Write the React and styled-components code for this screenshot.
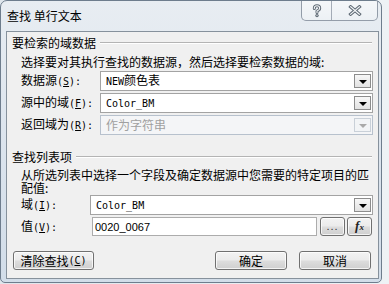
import React from 'react';
import styled, { createGlobalStyle } from 'styled-components';

const Global = createGlobalStyle`
  html, body { margin: 0; padding: 0; }
  body {
    width: 389px; height: 284px; overflow: hidden;
    background: #e6ebf0;
    font-family: "Noto Sans CJK SC", "Noto Sans", sans-serif;
    color: #000;
  }
`;

const Screen = styled.div`
  width: 389px;
  height: 284px;
  background: linear-gradient(90deg, #dfe6ec, #eef2f5);
  display: flex;
  align-items: flex-start;
`;

const Window = styled.div`
  box-sizing: border-box;
  width: 382px;
  height: 283px;
  border: 1px solid #6e7d8d;
  border-radius: 7px 7px 5px 5px;
  background: linear-gradient(180deg, #e8edf2 0%, #dde5ee 45%, #d2dde9 100%);
  display: flex;
  flex-direction: column;
  padding: 0 2px 3px 5px;
`;

const TitleBar = styled.div`
  height: 30px;
  display: flex;
  justify-content: space-between;
  align-items: flex-start;
  flex-shrink: 0;
`;

const Title = styled.div`
  margin: 9px 0 0 1px;
  font-size: 12px;
  line-height: 12px;
  white-space: pre;
`;

const Caption = styled.div`
  display: flex;
  height: 19px;
  margin-right: 1px;
  border: 1px solid rgba(70, 85, 105, 0.55);
  border-top: none;
  border-radius: 0 0 5px 5px;
  background: linear-gradient(180deg, rgba(255,255,255,0.55), rgba(255,255,255,0.25));
  overflow: hidden;
`;

const CapBtn = styled.div`
  width: ${p => p.$w}px;
  height: 19px;
  display: flex;
  align-items: center;
  justify-content: center;
  & + & { border-left: 1px solid rgba(70, 85, 105, 0.45); }
`;

const Client = styled.div`
  box-sizing: border-box;
  height: 248px;
  border: 1px solid #86919c;
  background: #f0f0f0;
  padding: 5px 5px 0 5px;
  display: flex;
  flex-direction: column;
`;

const GroupHeader = styled.div`
  display: flex;
  align-items: center;
  gap: 4px;
  height: 12px;
  margin-top: ${p => p.$mt}px;
  font-size: 12px;
  line-height: 12px;
`;

const Rule = styled.div`
  flex: 1;
  margin-right: 1px;
  border-top: 1px solid #b4b4b4;
  border-bottom: 1px solid #ffffff;
`;

const Desc = styled.div`
  padding-left: 9px;
  margin-top: ${p => p.$mt}px;
  font-size: 12px;
  line-height: ${p => p.$lh}px;
`;

const Rows = styled.div`
  display: flex;
  flex-direction: column;
  gap: 2px;
  margin-top: ${p => p.$mt}px;
`;

const Row = styled.div`
  display: flex;
  align-items: center;
  height: 20px;
  padding-left: 9px;
`;

const Label = styled.div`
  width: ${p => p.$w}px;
  flex-shrink: 0;
  font-size: 12px;
  line-height: 12px;
  white-space: nowrap;
`;

const Mono = styled.span`
  font-family: "DejaVu Sans Mono", "Liberation Mono", monospace;
  font-size: 10px;
`;

const Combo = styled.div`
  box-sizing: border-box;
  flex: 1;
  height: 20px;
  border: 1px solid ${p => (p.$disabled ? '#b7c1cd' : '#a3a3a3')};
  background: ${p => (p.$disabled ? '#f4f5f7' : '#ffffff')};
  display: flex;
  align-items: center;
  padding-left: 5px;
  font-size: 12px;
  line-height: 12px;
  color: ${p => (p.$disabled ? '#a0a0a0' : '#000')};
`;

const ComboText = styled.div`
  flex: 1;
  white-space: nowrap;
`;

const DropBtn = styled.div`
  box-sizing: border-box;
  width: 17px;
  height: 14px;
  margin-right: 1px;
  border: 1px solid ${p => (p.$disabled ? '#c9d0d8' : '#8c8c8c')};
  background: ${p => (p.$disabled ? '#f2f4f6' : 'linear-gradient(180deg, #f7f7f7, #e2e2e2)')};
  display: flex;
  align-items: center;
  justify-content: center;
`;

const Arrow = styled.div`
  width: 0;
  height: 0;
  border-left: 4px solid transparent;
  border-right: 4px solid transparent;
  border-top: 4px solid ${p => (p.$disabled ? '#a9a9a9' : '#000')};
  margin-top: 1px;
`;

const ValueRow = styled.div`
  display: flex;
  align-items: center;
  height: 19px;
  margin-top: 2px;
  padding-left: 9px;
  padding-right: 1px;
  gap: 2px;
`;

const Input = styled.div`
  box-sizing: border-box;
  flex: 1;
  height: 19px;
  border: 1px solid #acacac;
  background: #fff;
  display: flex;
  align-items: center;
  padding-left: 2px;
  font-family: "Liberation Sans", Arial, sans-serif;
  font-size: 11px;
  margin-right: 1px;
`;

const Button = styled.div`
  box-sizing: border-box;
  width: ${p => p.$w}px;
  height: 19px;
  border: 1px solid #707070;
  border-radius: 3px;
  background: linear-gradient(180deg, #f3f3f3 0%, #ebebeb 48%, #dddddd 52%, #cfcfcf 100%);
  box-shadow: inset 0 0 0 1px rgba(255,255,255,0.75);
  display: flex;
  align-items: center;
  justify-content: center;
  font-size: 12px;
  line-height: 12px;
  white-space: nowrap;
  flex-shrink: 0;
`;

const Dots = styled.span`
  font-family: "Liberation Sans", Arial, sans-serif;
  font-size: 11px;
  letter-spacing: 1px;
  color: #333;
  margin-top: -2px;
`;

const Fx = styled.span`
  font-family: "Liberation Serif", "Times New Roman", serif;
  font-style: italic;
  font-weight: bold;
  font-size: 13px;
  color: #222;
  & > small { font-size: 9px; }
`;

const Footer = styled.div`
  display: flex;
  align-items: center;
  margin-top: 15px;
  padding-left: 1px;
  padding-right: 2px;
  gap: 12px;
`;

const Spacer = styled.div`
  flex: 1;
`;

const HelpIcon = () => (
  <svg width="12" height="14" viewBox="0 0 12 14">
    <g fill="none" strokeLinecap="round" strokeLinejoin="round">
      <path d="M3.3 4.4 Q3.3 1.8 6 1.8 Q8.7 1.8 8.7 4.3 Q8.7 6 6 7.1 L6 8.4" stroke="#5f6a75" strokeWidth="3" />
      <path d="M3.3 4.4 Q3.3 1.8 6 1.8 Q8.7 1.8 8.7 4.3 Q8.7 6 6 7.1 L6 8.4" stroke="#f5f7f9" strokeWidth="1.1" />
    </g>
    <circle cx="6" cy="11.6" r="1.7" fill="#5f6a75" />
    <circle cx="6" cy="11.6" r="0.6" fill="#f5f7f9" />
  </svg>
);

const CloseIcon = () => (
  <svg width="14" height="11" viewBox="0 0 14 11">
    <g fill="none" strokeLinecap="square">
      <path d="M2.6 1.8 L11.4 9.2 M11.4 1.8 L2.6 9.2" stroke="#5f6a75" strokeWidth="3.2" />
      <path d="M2.6 1.8 L11.4 9.2 M11.4 1.8 L2.6 9.2" stroke="#f5f7f9" strokeWidth="1.2" />
    </g>
  </svg>
);

const KeyLabel = ({ w, text, k }) => (
  <Label $w={w}>
    {text}
    <Mono>(<u>{k}</u>):</Mono>
  </Label>
);

const ComboBox = ({ children, disabled }) => (
  <Combo $disabled={disabled}>
    <ComboText>{children}</ComboText>
    <DropBtn $disabled={disabled}>
      <Arrow $disabled={disabled} />
    </DropBtn>
  </Combo>
);

export default function App() {
  return (
    <>
      <Global />
      <Screen>
        <Window>
          <TitleBar>
            <Title>查找 单行文本</Title>
            <Caption>
              <CapBtn $w={29}><HelpIcon /></CapBtn>
              <CapBtn $w={45}><CloseIcon /></CapBtn>
            </Caption>
          </TitleBar>
          <Client>
            <GroupHeader $mt={0}>
              <span>要检索的域数据</span>
              <Rule />
            </GroupHeader>
            <Desc $mt={7} $lh={12}>选择要对其执行查找的数据源，然后选择要检索数据的域:</Desc>
            <Rows $mt={3}>
              <Row>
                <KeyLabel w={79} text="数据源" k="S" />
                <ComboBox><Mono>NEW</Mono>颜色表</ComboBox>
              </Row>
              <Row>
                <KeyLabel w={79} text="源中的域" k="F" />
                <ComboBox><Mono>Color_BM</Mono></ComboBox>
              </Row>
              <Row>
                <KeyLabel w={79} text="返回域为" k="R" />
                <ComboBox disabled>作为字符串</ComboBox>
              </Row>
            </Rows>
            <GroupHeader $mt={16}>
              <span>查找列表项</span>
              <Rule />
            </GroupHeader>
            <Desc $mt={5} $lh={13}>
              从所选列表中选择一个字段及确定数据源中您需要的特定项目的匹
              <br />
              配值:
            </Desc>
            <Rows $mt={1}>
              <Row>
                <KeyLabel w={69} text="域" k="I" />
                <ComboBox><Mono>Color_BM</Mono></ComboBox>
              </Row>
            </Rows>
            <ValueRow>
              <KeyLabel w={69} text="值" k="V" />
              <Input>0020_0067</Input>
              <Button $w={25}><Dots>...</Dots></Button>
              <Button $w={25}><Fx>f<small>x</small></Fx></Button>
            </ValueRow>
            <Footer>
              <Button $w={81}>清除查找<Mono>(<u>C</u>)</Mono></Button>
              <Spacer />
              <Button $w={72}>确定</Button>
              <Button $w={72}>取消</Button>
            </Footer>
          </Client>
        </Window>
      </Screen>
    </>
  );
}
